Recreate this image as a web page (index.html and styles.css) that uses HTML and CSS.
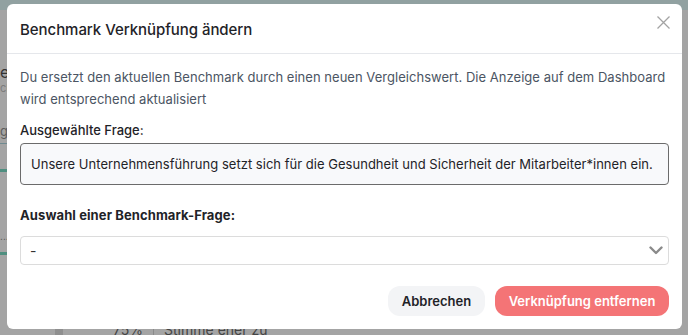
FILE: index.html
```html
<!DOCTYPE html>
<html lang="de">
<head>
<meta charset="utf-8">
<title>Benchmark Verknüpfung ändern</title>
<link rel="stylesheet" href="styles.css">
</head>
<body>
<div class="page">
  <div class="page-top"></div>
  <div class="page-side">
    <div class="ps-title">e</div>
    <div class="ps-sub">ch</div>
    <div class="ps-tab">ge</div>
    <div class="ps-line"></div>
    <div class="ps-bar"></div>
    <div class="ps-dots">....</div>
    <div class="ps-bar2"></div>
  </div>
  <div class="page-bottom"><span class="pb-block"></span><span class="pb-pct">75%</span><span class="pb-sep"></span><span class="pb-text">Stimme eher zu</span></div>
</div>
<div class="backdrop">
  <div class="modal">
    <div class="modal-header">
      <h2 class="modal-title">Benchmark Verknüpfung ändern</h2>
      <button class="close-btn" aria-label="Schließen">
        <svg width="13" height="13" viewBox="0 0 13 13"><path d="M0.5 0.5 L12.5 12.5 M12.5 0.5 L0.5 12.5" stroke="#a3a3a3" stroke-width="1.3" fill="none"/></svg>
      </button>
    </div>
    <div class="modal-body">
      <p class="desc">Du ersetzt den aktuellen Benchmark durch einen neuen Vergleichswert. Die Anzeige auf dem Dashboard wird entsprechend aktualisiert</p>
      <div class="label">Ausgewählte Frage:</div>
      <div class="question">Unsere Unternehmensführung setzt sich für die Gesundheit und Sicherheit der Mitarbeiter*innen ein.</div>
      <div class="label bold">Auswahl einer Benchmark-Frage:</div>
      <div class="select">
        <span class="select-value">-</span>
        <svg class="chev" width="14" height="9" viewBox="0 0 14 9"><path d="M1.5 1.5 L7 7 L12.5 1.5" stroke="#8a8a8a" stroke-width="2.4" fill="none" stroke-linecap="round" stroke-linejoin="round"/></svg>
      </div>
      <div class="actions">
        <button class="btn btn-cancel">Abbrechen</button>
        <button class="btn btn-danger">Verknüpfung entfernen</button>
      </div>
    </div>
  </div>
</div>
</body>
</html>
```

FILE: styles.css
```css
* { box-sizing: border-box; }
html, body { margin: 0; padding: 0; }
body {
  width: 688px;
  height: 335px;
  overflow: hidden;
  font-family: "Inter", "Liberation Sans", sans-serif;
  background: #a4a4a4;
  position: relative;
}
.page { width: 688px; height: 335px; display: flex; flex-direction: column; }
.page-top { height: 10px; background: #91a1a1; }
.page-side { flex: 1; font-size: 13px; color: #4a4a4a; }
.ps-title { margin-top: 54px; font-size: 16px; color: #333; line-height: 16px; }
.ps-sub { margin-top: 2px; font-size: 11px; color: #7c7c7c; line-height: 13px; }
.ps-tab { margin-top: 28px; font-size: 13px; color: #5c5c5c; line-height: 16px; }
.ps-line { margin-top: 4px; width: 8px; height: 1px; background: #6f8a90; }
.ps-bar { margin-top: 25px; width: 7px; height: 3px; background: #4f8f80; }
.ps-dots { margin-top: 60px; font-size: 10px; color: #555; line-height: 8px; }
.ps-bar2 { margin-top: 12px; width: 7px; height: 3px; background: #4f8f80; }
.page-bottom { height: 12px; display: flex; align-items: flex-start; font-size: 14px; color: #444; line-height: 14px; }
.pb-block { width: 8px; height: 12px; margin-left: 55px; background: #8f8f8f; }
.pb-pct { margin-left: 50px; }
.pb-sep { width: 1px; height: 12px; background: #8a8a8a; margin: 0 10px; }

.backdrop {
  position: absolute;
  inset: 0;
  padding: 4px 6px 0 7px;
}
.modal {
  width: 675px;
  height: 325px;
  background: #ffffff;
  border-radius: 6px;
  display: flex;
  flex-direction: column;
}
.modal-header {
  height: 50px;
  border-bottom: 1px solid #e5e7eb;
  display: flex;
  align-items: center;
  justify-content: space-between;
  padding: 1px 11px 0 13px;
}
.modal-title {
  margin: 0;
  font-size: 15px;
  font-weight: 500;
  color: #1f2328;
  letter-spacing: -0.05px;
}
.close-btn {
  border: 0;
  background: transparent;
  padding: 0;
  width: 16px;
  height: 16px;
  display: flex;
  align-items: center;
  justify-content: center;
  margin-top: -14px;
}
.modal-body {
  padding: 12px 13px 0 13px;
  display: flex;
  flex-direction: column;
}
.desc {
  margin: 0;
  font-size: 13px;
  line-height: 22px;
  color: #4b5563;
  letter-spacing: 0.03px;
}
.label {
  margin-top: 10px;
  font-size: 13px;
  line-height: 20px;
  font-weight: 500;
  color: #1f2328;
  letter-spacing: 0;
}
.label.bold { font-weight: 700; margin-top: 20px; letter-spacing: 0.1px; }
.question {
  margin-top: 3px;
  height: 42px;
  border: 1px solid #6b6b6b;
  border-radius: 4px;
  background: #f8f9fb;
  display: flex;
  align-items: center;
  padding: 0 10px;
  font-size: 13px;
  color: #1f2328;
  white-space: nowrap;
  letter-spacing: 0.02px;
}
.select {
  margin-top: 11px;
  height: 29px;
  border: 1px solid #dcdcdc;
  border-radius: 4px;
  display: flex;
  align-items: center;
  justify-content: space-between;
  padding: 0 5px 0 9px;
  font-size: 14px;
  color: #333;
}
.actions {
  margin-top: 21px;
  display: flex;
  justify-content: flex-end;
  gap: 10px;
}
.btn {
  height: 30px;
  border: 0;
  border-radius: 12px;
  font-family: inherit;
  font-size: 13px;
  font-weight: 600;
  padding: 0;
  white-space: nowrap;
  text-align: center;
}
.btn-cancel { background: #f3f4f6; color: #1f2328; width: 97px; }
.btn-danger { background: #f47476; color: #ffffff; width: 174px; }
```
